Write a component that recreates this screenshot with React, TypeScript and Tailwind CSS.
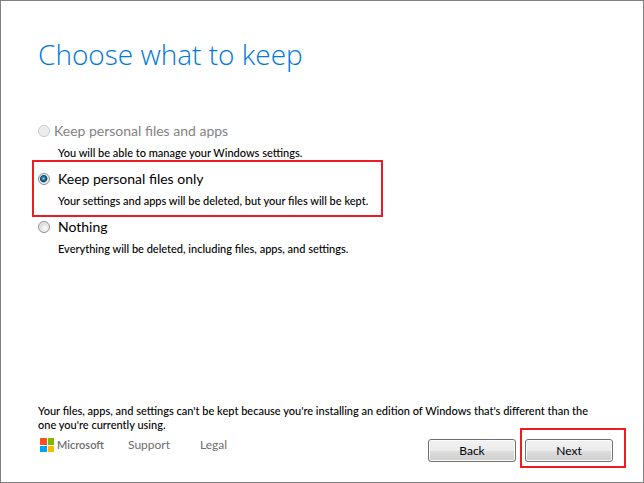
import React, { useState } from 'react';

interface KeepOption {
  id: string;
  title: string;
  description: string;
  disabled?: boolean;
}

const options: KeepOption[] = [
  {
    id: 'files-and-apps',
    title: 'Keep personal files and apps',
    description: 'You will be able to manage your Windows settings.',
    disabled: true,
  },
  {
    id: 'files-only',
    title: 'Keep personal files only',
    description: 'Your settings and apps will be deleted, but your files will be kept.',
  },
  {
    id: 'nothing',
    title: 'Nothing',
    description: 'Everything will be deleted, including files, apps, and settings.',
  },
];

const radioClass =
  'h-3 w-3 shrink-0 appearance-none rounded-full border border-[#8e8f8f] bg-[radial-gradient(circle_at_60%_60%,#f4f4f4_20%,#c9cccf_75%)] shadow-[inset_0_0_0_1px_#f4f4f4] checked:border-[#8e8f8f] checked:bg-[radial-gradient(circle_at_45%_45%,#7fd0f2_0,#2b86b8_20%,#0b3a5e_40%,#dfe5e8_56%)] disabled:border-[#c8c8c8] disabled:bg-none disabled:bg-[#ececec]';

const buttonClass =
  'h-[23px] w-[88px] rounded-[3px] border border-[#707070] bg-[linear-gradient(#f2f2f2,#ebebeb_50%,#dddddd_50%,#cfcfcf)] text-xs leading-4 text-black shadow-[inset_0_0_0_1px_#fcfcfc]';

function MicrosoftLogo() {
  return (
    <svg width="14" height="14" viewBox="0 0 14 14" shapeRendering="crispEdges" aria-hidden="true">
      <rect width="7" height="7" fill="#f8511d" />
      <rect x="8" width="6" height="7" fill="#7cb900" />
      <rect y="8" width="7" height="6" fill="#00a3ee" />
      <rect x="8" y="8" width="6" height="6" fill="#fdb800" />
    </svg>
  );
}

// Red frame that draws the eye to a control
function Highlight({ className }: { className: string }) {
  return <span aria-hidden="true" className={`pointer-events-none absolute border-2 border-[#ed1c24] ${className}`} />;
}

export default function App() {
  const [selected, setSelected] = useState('files-only');

  return (
    <main className="flex min-h-screen flex-col border border-[#808080] bg-white pt-[33px] pr-[30px] pb-5 pl-[37px] font-['Lato','Open_Sans',sans-serif] text-black">
      <h1 className="font-['Open_Sans','Noto_Sans',sans-serif] text-[28px] leading-10 font-light text-[#0078e0]">
        Choose what to keep
      </h1>

      <div role="radiogroup" aria-label="Choose what to keep" className="mt-[46px] flex flex-col items-start gap-1">
        {options.map((option) => (
          <div key={option.id} className="relative">
            <div className={`flex items-center ${option.disabled ? 'gap-1' : 'gap-2'}`}>
              <input
                type="radio"
                id={option.id}
                name="keep"
                aria-describedby={`${option.id}-description`}
                checked={selected === option.id}
                disabled={option.disabled}
                onChange={() => setSelected(option.id)}
                className={radioClass}
              />
              <label
                htmlFor={option.id}
                className={`text-sm leading-[22px] ${option.disabled ? 'text-[#838383]' : ''}`}
              >
                {option.title}
              </label>
            </div>
            <p id={`${option.id}-description`} className="pl-5 text-[11px] leading-[22px] font-medium">
              {option.description}
            </p>
            {option.id === 'files-only' && <Highlight className="-top-2 -right-[15px] -bottom-[5px] -left-[6px]" />}
          </div>
        ))}
      </div>

      <footer className="mt-auto">
        <p className="pr-3 text-[11px] leading-[14px] font-medium">
          Your files, apps, and settings can't be kept because you're installing an edition of Windows that's different
          than the one you're currently using.
        </p>
        <div className="mt-[5px] flex items-start justify-between">
          <div className="flex h-4 items-center pl-[2px] text-xs text-[#6d6d6d]">
            <MicrosoftLogo />
            <span className="ml-[3px] text-[11px] font-semibold">Microsoft</span>
            <a href="#support" className="ml-6">
              Support
            </a>
            <a href="#legal" className="ml-[30px]">
              Legal
            </a>
          </div>
          <div className="mt-[2px] flex gap-[9px]">
            <button type="button" className={buttonClass}>
              Back
            </button>
            <div className="relative flex">
              <button type="button" className={buttonClass}>
                Next
              </button>
              <Highlight className="-top-[11px] -right-[13px] -bottom-[6px] -left-[5px]" />
            </div>
          </div>
        </div>
      </footer>
    </main>
  );
}
